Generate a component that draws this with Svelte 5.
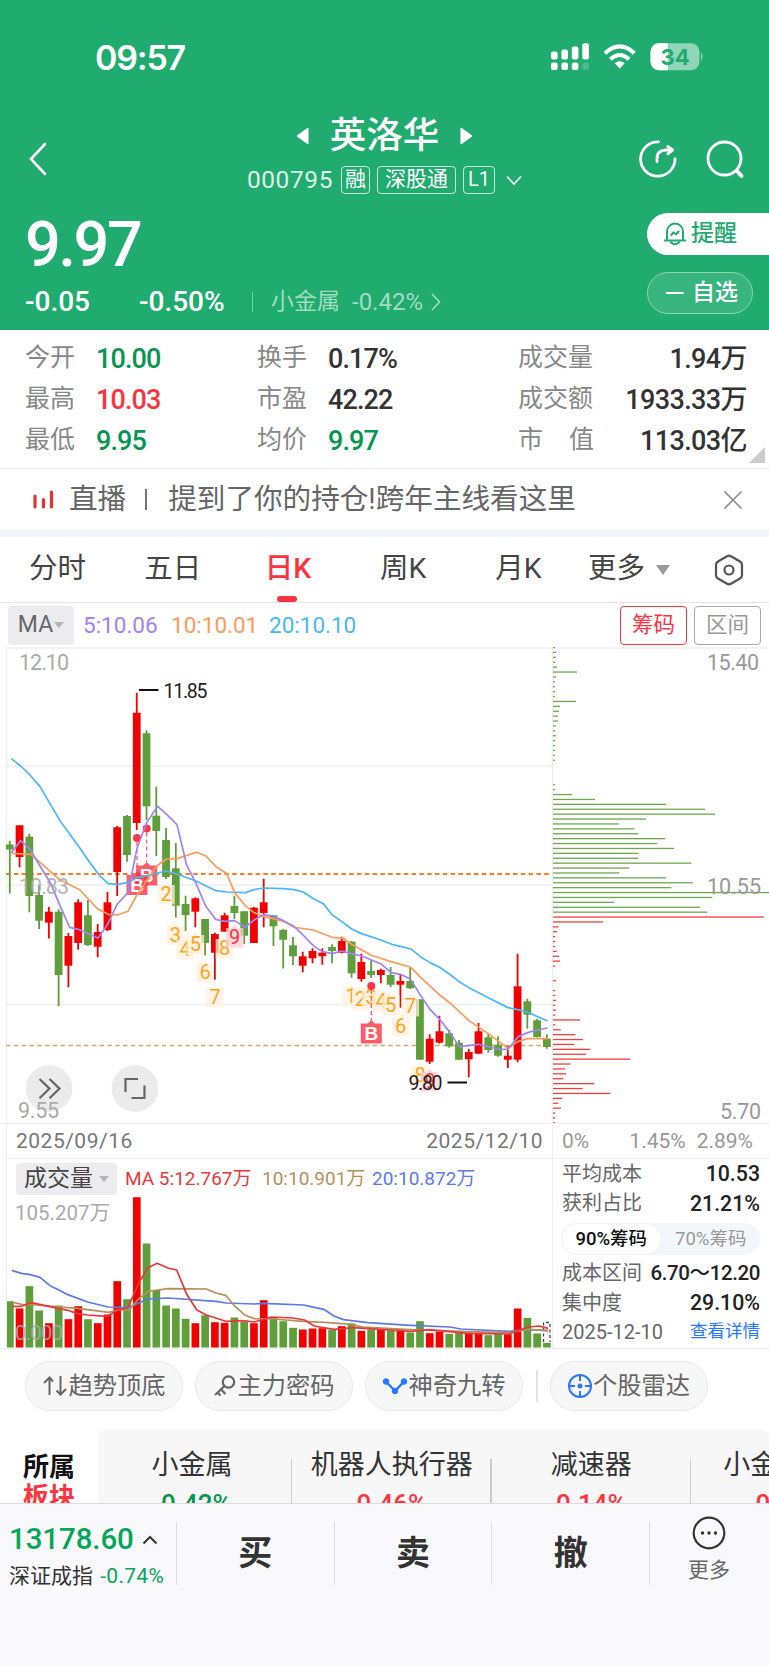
<script>
  // Quote summary, laid out row by row
  const stats = [
    { label: '今开', value: '10.00', tone: 'down' },
    { label: '换手', value: '0.17%', tone: '' },
    { label: '成交量', value: '1.94万', tone: '' },
    { label: '最高', value: '10.03', tone: 'up' },
    { label: '市盈', value: '42.22', tone: '' },
    { label: '成交额', value: '1933.33万', tone: '' },
    { label: '最低', value: '9.95', tone: 'down' },
    { label: '均价', value: '9.97', tone: 'down' },
    { label: '市值', value: '113.03亿', tone: '', spread: true }
  ];

  const tabs = ['分时', '五日', '日K', '周K', '月K'];
  let activeTab = $state('日K');

  const STEP = 9.765;
  const barX = (i) => 9.8 + i * STEP;

  // [direction, high, body top, body bottom, low]
  const candles = [
    ['g', 841, 844.5, 849.5, 893.5], ['r', 825.3, 825.3, 857, 867.3], ['g', 833.7, 836.7, 896, 912.3],
    ['g', 885, 895, 920.7, 929], ['r', 907, 911.7, 922.7, 938.5], ['g', 909, 911.7, 975, 1006],
    ['r', 933, 936, 965.7, 987.3], ['r', 899.3, 902.3, 943, 949.7], ['g', 900, 915.3, 945, 946],
    ['r', 924, 932, 946.7, 957.3], ['r', 892, 902.3, 930, 931], ['r', 826, 827.3, 872, 896],
    ['g', 815, 816, 855, 861.7], ['r', 692.7, 712.7, 823, 830], ['g', 730.3, 733.3, 806.3, 820],
    ['g', 786.7, 815.7, 831, 856], ['g', 828, 840, 877, 879], ['g', 843, 868.3, 905.7, 917.7],
    ['g', 895.7, 904, 915, 931], ['r', 897.3, 898.3, 911.7, 927.3], ['g', 919, 919, 943, 955.3],
    ['r', 932.7, 934, 952.7, 979.7], ['r', 912.7, 915.3, 931.7, 931.7], ['g', 895.7, 906, 913, 919],
    ['g', 911.3, 911.3, 935.7, 944], ['r', 907, 907.7, 943, 943], ['r', 878.7, 902.3, 913, 927.3],
    ['g', 915.3, 915.3, 926.3, 946], ['g', 929, 930, 939.7, 968.5], ['g', 937, 945.3, 956.3, 965],
    ['r', 951.7, 956.3, 965.7, 972.3], ['r', 948.3, 951, 958.3, 963.3], ['r', 948.3, 952.7, 956.3, 964.7],
    ['g', 944.3, 947, 951, 963.3], ['r', 936.7, 941, 952.7, 953.3], ['g', 941, 941.7, 973.3, 977.7],
    ['r', 953.7, 962, 979, 981.7], ['g', 960, 971, 975, 978], ['r', 968.7, 970, 975, 983.3],
    ['g', 967, 975, 984.7, 987], ['r', 975, 981, 984.7, 1007.7], ['g', 967.7, 981, 988.3, 989],
    ['g', 999.3, 999.3, 1059.7, 1059.7], ['r', 1034.3, 1038.7, 1061.7, 1064], ['r', 1015.7, 1031.3, 1042.7, 1043.7],
    ['g', 1030, 1033.3, 1046.3, 1047.7], ['g', 1040, 1042.7, 1059.7, 1059.7], ['r', 1049, 1052, 1059.3, 1077.3],
    ['r', 1023, 1031.3, 1053.7, 1053.7], ['g', 1033.3, 1037.3, 1050, 1052.7], ['g', 1036.3, 1044.7, 1055.7, 1056.7],
    ['r', 1046, 1055.7, 1059.7, 1068], ['r', 953.7, 986.3, 1059.7, 1062.3], ['g', 998.7, 1001.3, 1014.7, 1028.7],
    ['g', 1018.7, 1020.3, 1037, 1037.5], ['g', 1034.3, 1038.7, 1047, 1048.7]
  ];

  // Heights of the volume bars, same order as the candles
  const volumes = [
    46.3, 39, 61.3, 37, 24.3, 42, 28.3, 41.3, 28.3, 24.3, 33, 66.3, 48.3, 150.3, 104, 57.3, 42, 39, 28.7, 24.3,
    32.3, 25.3, 24.7, 30, 25.7, 24.3, 47.3, 29.7, 26.3, 19.7, 18, 19, 19.3, 17.7, 21.3, 24, 16.7, 18, 17.7, 17,
    18, 15, 26.3, 14.3, 16, 13.7, 16, 15, 15, 12.3, 13.7, 13.3, 39, 29.7, 14, 4.7
  ];

  // Chip distribution: bar lengths from the top price down, the current price splits the colours
  const CHIP_SPLIT = 55;
  const chips = [
    2, 3, 3, 2, 4, 24, 3, 2, 2, 2, 2, 23, 7, 6, 5, 5, 3, 2, 3, 2, 2, 2, 2, 2, 0, 0, 0, 0, 2, 2, 19.3, 42, 113.3,
    152.3, 162, 93, 66, 81.3, 85.3, 112.3, 104.3, 121, 85.3, 85.3, 138.3, 76.3, 66.3, 113, 139.7, 118.3, 216,
    159.3, 61, 147, 154.3, 210.7, 50, 5.3, 4, 2.3, 2.3, 2.3, 3.7, 6, 7, 2.3, 0, 0, 3, 0, 2.3, 2.3, 3, 2.3, 3,
    2.3, 27, 2.3, 7.7, 22.3, 30, 21.3, 37.3, 33, 77.3, 17.3, 12, 13, 10.3, 41.3, 29.7, 57.3, 9.3, 5.3, 8, 2.3,
    2.3, 2.3
  ];

  const marks = [
    ['2', 166, 894], ['3', 175.3, 934.5], ['4', 185, 949], ['5', 195.3, 944], ['6', 205, 972], ['7', 215, 997],
    ['8', 224.5, 948], ['9', 234.7, 937], ['1', 351, 996], ['2', 360.7, 999], ['3', 371, 997], ['4', 381, 1001],
    ['5', 390.7, 1004.5], ['6', 400.7, 1026], ['7', 410.3, 1006], ['8', 420, 1075], ['9', 430, 1081]
  ];

  const buys = [
    { x: 146.7, dot: 828.5, y: 875 },
    { x: 137, dot: 838, y: 884.5 },
    { x: 371.3, dot: 986, y: 1033 }
  ];

  // Moving averages, on a grid of a third of a pixel
  const priceLines = [
    {
      color: '#49b8fb',
      points:
        '34,356 62,378 90,405 120,440 180,542 240,625 270,668 298,706 325,731 352,733 384,727 411,713 440,707 499,693 531,702 590,724 647,752 680,756 737,758 762,749 791,744 850,746 883,749 910,756 938,775 970,791 997,825 1026,845 1055,867 1085,881 1143,900 1175,913 1202,919 1233,927 1262,951 1290,968 1319,982 1348,1002 1380,1027 1407,1043 1465,1073 1524,1103 1553,1109 1583,1117 1643,1143'
    },
    {
      color: '#fb9c5b',
      points:
        '34,640 93,643 176,717 240,750 294,808 325,823 352,825 384,814 411,765 470,678 499,657 531,656 590,637 618,648 650,682 680,700 704,758 735,796 762,818 791,829 820,836 850,844 883,862 940,870 997,892 1030,895 1055,913 1114,946 1173,965 1231,981 1265,1015 1319,1065 1350,1089 1407,1142 1465,1181 1524,1225 1553,1205 1583,1196 1643,1196'
    },
    {
      color: '#a183f2',
      points:
        '34,638 62,602 88,625 120,678 152,730 180,797 209,862 235,868 294,894 322,855 352,792 384,758 411,625 440,548 473,499 500,523 531,554 560,675 588,730 617,798 647,838 674,844 704,842 735,862 762,840 791,824 820,828 850,842 880,858 909,885 940,917 967,935 997,941 1026,933 1055,941 1085,948 1114,960 1145,973 1173,998 1202,1003 1231,1017 1262,1067 1290,1108 1319,1138 1348,1175 1378,1220 1436,1213 1495,1228 1524,1228 1555,1190 1583,1178 1612,1170 1643,1164'
    }
  ];

  const volumeLines = [
    {
      color: '#5b7be8',
      points:
        '33,451 60,460 85,464 112,472 140,497 165,510 190,524 245,546 303,561 360,563 388,549 415,537 470,534 605,544 632,549 712,552 737,550 850,555 880,562 907,568 935,588 962,599 1030,608 1150,616 1260,621 1290,627 1425,634 1480,629 1535,632'
    },
    {
      color: '#b5915a',
      points:
        '33,546 60,553 100,555 217,565 305,577 335,569 360,571 388,537 415,514 470,506 578,507 605,519 632,526 657,558 685,585 712,596 765,597 850,604 910,607 985,613 1015,621 1150,629 1310,635 1425,638 1480,628 1535,632'
    },
    {
      color: '#e8383b',
      points:
        '33,559 60,559 88,548 140,560 190,571 217,581 245,585 300,589 330,570 358,563 388,490 415,443 440,430 470,444 495,450 523,523 551,570 578,585 632,604 680,602 712,606 760,591 820,594 853,600 880,618 935,628 990,623 1150,634 1200,629 1310,640 1425,642 1480,621 1510,618 1535,625'
    }
  ];

  const sectors = [
    { name: '小金属', change: '-0.42%', tone: 'down' },
    { name: '机器人执行器', change: '0.46%', tone: 'up' },
    { name: '减速器', change: '0.14%', tone: 'up' },
    { name: '小金属概念', change: '0.42%', tone: 'up' }
  ];
</script>

<div class="page">
  <header>
    <div class="status">
      <span class="clock">09:57</span>
      <svg class="signals" width="152" height="30" viewBox="0 0 152 30">
        <g fill="#fff">
          <rect x="1" y="9.5" width="6.6" height="8" rx="2" />
          <rect x="11.4" y="7.5" width="6.6" height="10" rx="2" />
          <rect x="21.8" y="4.5" width="6.6" height="13" rx="2" />
          <rect x="32.3" y="1.2" width="6.6" height="16.3" rx="2" />
          <rect x="1" y="20.5" width="6.6" height="7.6" rx="2" />
          <rect x="11.4" y="20.5" width="6.6" height="7.6" rx="2" />
          <rect x="21.8" y="20.5" width="6.6" height="7.6" rx="2" />
          <rect x="32.3" y="20.5" width="6.6" height="7.6" rx="2" opacity="0.2" />
          <path d="M69.7 26.5l-5-5.2q5-4 10 0z" />
        </g>
        <g fill="none" stroke="#fff" stroke-width="4">
          <path d="M55 11.2q14.7-13.6 29.4 0" />
          <path d="M60.3 17.2q9.4-8.4 18.8 0" />
        </g>
        <rect x="100.5" y="1.2" width="49" height="27" rx="8.5" fill="#90d5b7" />
        <path d="M117.7 1.2V28.2H109a8.5 8.5 0 0 1-8.5-8.5V9.7a8.5 8.5 0 0 1 8.5-8.5z" fill="#fff" />
        <path d="M151 10.5q3 4 0 8.5z" fill="#90d5b7" />
        <text x="125" y="22.7" text-anchor="middle" class="battery">34</text>
      </svg>
    </div>

    <div class="nav">
      <svg width="24" height="36" viewBox="0 0 24 36">
        <path d="M19 3L5 18l14 15" fill="none" stroke="#fff" stroke-width="2.6" stroke-linecap="round" />
      </svg>
      <div class="heading">
        <div class="title">
          <svg width="14" height="18" viewBox="0 0 14 18"><path d="M12 1v16L1 9z" fill="#fff" stroke="#fff" stroke-linejoin="round" /></svg>
          <h1>英洛华</h1>
          <svg width="14" height="18" viewBox="0 0 14 18"><path d="M2 1v16L13 9z" fill="#fff" stroke="#fff" stroke-linejoin="round" /></svg>
        </div>
        <div class="code">
          <span class="number">000795</span>
          <span class="tag">融</span>
          <span class="tag wide">深股通</span>
          <span class="tag level">L1</span>
          <svg width="16" height="11" viewBox="0 0 16 11"><path d="M1 1.5l7 7.500 7-7.500" fill="none" stroke="#fff" stroke-width="1.6" /></svg>
        </div>
      </div>
      <div class="actions">
        <svg width="40" height="40" viewBox="0 0 40 40" fill="none" stroke="#fff" stroke-width="2.8" stroke-linecap="round" stroke-linejoin="round">
          <path d="M20.5 2.8A17.2 17.2 0 1 0 37 19.8" />
          <path d="M19 22.5v-3q0-8.5 9-8.5h6M29.8 7.3l5 3.7-5 3.8" />
        </svg>
        <svg width="40" height="40" viewBox="0 0 40 40" fill="none" stroke="#fff" stroke-width="2.8" stroke-linecap="round">
          <circle cx="19.5" cy="19.5" r="16.5" />
          <path d="M32 32l4.5 4.8" stroke-width="4" />
        </svg>
      </div>
    </div>

    <div class="quote">
      <div>
        <div class="price">9.97</div>
        <div class="changes">
          <span class="diff">-0.05</span>
          <span class="percent">-0.50%</span>
          <span class="sector">小金属</span>
          <span class="sector-change">-0.42%</span>
          <svg width="12" height="18" viewBox="0 0 12 18"><path d="M2 1l7.5 8L2 17" fill="none" stroke="#a3dcc2" stroke-width="1.6" /></svg>
        </div>
      </div>
      <div class="pills">
        <button class="pill remind">
          <svg width="24" height="24" viewBox="0 0 24 24" fill="none" stroke="#20ab6f" stroke-width="2" stroke-linecap="round" stroke-linejoin="round">
            <path d="M1.8 18.5h20.4M4 18.5V9.5a8 8 0 0 1 16 0v9M8 20.5q4 3.5 8 0" />
            <path d="M8.3 13l2.2-2.7 2.6 1.9 2.6-2.7" />
          </svg>提醒
        </button>
        <button class="pill watch"><i></i>自选</button>
      </div>
    </div>
  </header>

  <section class="stats">
    {#each stats as s}
      <div class="stat">
        <span class="label" class:spread={s.spread}>{s.label}</span>
        <span class="value {s.tone}">{s.value}</span>
      </div>
    {/each}
    <i class="corner"></i>
  </section>

  <section class="live">
    <svg width="22" height="20" viewBox="0 0 22 20" stroke="#e2323b" stroke-width="3.2" stroke-linecap="round">
      <path d="M2 6v11M10.5 9.5v7.5M18.5 2v15" />
    </svg>
    <span>直播</span><i></i><span class="headline">提到了你的持仓!跨年主线看这里</span>
    <svg class="close" width="20" height="20" viewBox="0 0 20 20" stroke="#888" stroke-width="1.6"><path d="M1.5 1.5l17 17M18.5 1.5l-17 17" /></svg>
  </section>

  <nav class="tabs">
    {#each tabs as tab}
      <button class="tab" class:active={tab === activeTab} onclick={() => (activeTab = tab)}>{tab}</button>
    {/each}
    <button class="more-tab">更多<i></i></button>
    <svg width="30" height="32" viewBox="0 0 30 32" fill="none" stroke="#555" stroke-width="2.2" stroke-linejoin="round">
      <path d="M13 2.3q2-1.2 4 0l9 5.2q2 1.2 2 3.3v10.4q0 2.1-2 3.3l-9 5.2q-2 1.2-4 0l-9-5.2q-2-1.2-2-3.3V10.8q0-2.1 2-3.3z" />
      <circle cx="15" cy="16" r="4.5" />
    </svg>
  </nav>

  <div class="legend">
    <span class="picker">MA<i></i></span>
    <span class="ma5">5:10.06</span>
    <span class="ma10">10:10.01</span>
    <span class="ma20">20:10.10</span>
    <button class="toggle on">筹码</button>
    <button class="toggle">区间</button>
  </div>

  <svg class="chart" width="769" height="476" viewBox="0 647 769 476">
    <g stroke="#eeeef0" stroke-width="1.4" fill="none">
      <path d="M6 648H769M6 766H552M6 885H552M6 1004.5H552M6.5 648V1123M552.5 648V1123" />
    </g>
    <g class="axis">
      <text x="19" y="669.5" textLength="50">12.10</text>
    </g>
    <path d="M6 874H550" stroke="#fb7d28" stroke-width="1.8" stroke-dasharray="4.5 3.3" />
    <path d="M6 1045.5H550" stroke="#cdaa6d" stroke-width="1.6" stroke-dasharray="4.5 3.3" />

    {#each candles as [dir, high, top, bottom, low], i}
      <g class={dir}>
        <rect x={barX(i) - 0.9} y={high} width="1.8" height={low - high} />
        <rect x={barX(i) - 3.9} y={top} width="7.8" height={bottom - top} />
      </g>
    {/each}

    {#each marks as [n, x, y]}
      <g class="mark" class:last={n === '9'}>
        <path d="M{x - 8.8} {y - 9}h6l2.8-3.2 2.8 3.2h6v19.5h-17.6z" />
        <text {x} y={y + 7.2} text-anchor="middle">{n}</text>
      </g>
    {/each}

    {#each buys as b}
      <g class="buy">
        <circle cx={b.x} cy={b.dot} r="4" />
        <path d="M{b.x} {b.dot + 4}V{b.y - 13}" class="stem" />
        <path d="M{b.x - 10.5} {b.y - 9.5}h7l3.5-3.5 3.5 3.5h7v20h-21z" opacity="0.8" />
        <text x={b.x} y={b.y + 7} text-anchor="middle">B</text>
      </g>
    {/each}

    <g transform="translate(0 640) scale(0.3333)">
      {#each priceLines as line}
        <polyline points={line.points} stroke={line.color} class="average" />
      {/each}
    </g>

    <g class="peak">
      <path d="M139 690H158.5M447.5 1082.5H467" />
      <text x="163.5" y="697.5" textLength="44">11.85</text>
      <text x="408.5" y="1089.5" textLength="34">9.80</text>
    </g>

    {#each chips as w, i}
      {#if w}
        <rect x="553" y={646.9 + i * 4.9} width={w} height="1.3" fill={i < CHIP_SPLIT ? '#6fa94e' : '#f2403f'} />
      {/if}
    {/each}

    <g fill="#ebebeb">
      <circle cx="49" cy="1088.5" r="23.4" />
      <circle cx="135" cy="1088.5" r="23.4" />
    </g>
    <g fill="none" stroke="#666" stroke-width="2.2">
      <path d="M39.5 1079l10 9.6-10 9.7M49.5 1079l10 9.6-10 9.7" />
      <path d="M125.5 1092v-13h12.5M144.5 1085.5V1098h-13" />
    </g>

    <g class="axis">
      <text x="19" y="893.5" textLength="50" opacity="0.85">10.83</text>
      <text x="18" y="1118" textLength="41">9.55</text>
    </g>
    <g class="axis dark">
      <text x="707" y="669.5" textLength="52">15.40</text>
      <text x="707" y="893.5" textLength="54">10.55</text>
      <text x="720" y="1118.5" textLength="41">5.70</text>
    </g>
  </svg>

  <div class="lower">
    <div class="volume">
      <div class="dates"><span>2025/09/16</span><span>2025/12/10</span></div>
      <div class="volume-legend">
        <span class="picker">成交量<i></i></span>
        <span class="v5">MA 5:12.767万</span>
        <span class="v10">10:10.901万</span>
        <span class="v20">20:10.872万</span>
      </div>
      <svg width="545" height="152" viewBox="7 1196 545 152">
        <text x="15" y="1220" class="scale" textLength="95">105.207万</text>
        {#each volumes as h, i}
          <rect x={barX(i) - 3.8} y={1347.5 - h} width="7.7" height={h} class={candles[i][0]} />
        {/each}
        <path d="M543.5 1342V1322.5H550V1342" fill="none" stroke="#444" stroke-width="1.3" stroke-dasharray="3 2.5" />
        <g transform="translate(0 1120) scale(0.3571 0.3333)">
          {#each volumeLines as line}
            <polyline points={line.points} stroke={line.color} class="average" />
          {/each}
        </g>
        <text x="15" y="1340" class="scale" opacity="0.85" textLength="48">0.000</text>
      </svg>
    </div>

    <aside>
      <div class="percents"><span>0%</span><span>1.45%</span><span>2.89%</span></div>
      <div class="row"><span>平均成本</span><b>10.53</b></div>
      <div class="row"><span>获利占比</span><b>21.21%</b></div>
      <div class="switch"><span class="on">90%筹码</span><span>70%筹码</span></div>
      <div class="row"><span>成本区间</span><b class="range">6.70～12.20</b></div>
      <div class="row"><span>集中度</span><b>29.10%</b></div>
      <div class="row last"><span>2025-12-10</span><a href="#detail">查看详情</a></div>
    </aside>
  </div>

  <div class="tools">
    <button>
      <svg width="26" height="24" viewBox="0 0 26 24" fill="none" stroke="#666" stroke-width="2"><path d="M7.5 21V4M2 9l5.5-5.5L11 7.500M18.5 2v18M14.5 16.5l4 4 5.5-5.5" /></svg>趋势顶底
    </button>
    <button>
      <svg width="24" height="24" viewBox="0 0 24 24" fill="none" stroke="#666" stroke-width="2.2"><circle cx="15.5" cy="8" r="5.7" /><path d="M11.5 12L2 21M8 15.5l4.5 4.500M4.5 18.5l3 3" /></svg>主力密码
    </button>
    <button>
      <svg width="26" height="24" viewBox="0 0 26 24" fill="#2878ff" stroke="#2878ff"><path d="M4 7.5l9 9.5 9-9.5" fill="none" stroke-width="2.5" /><circle cx="4" cy="7.5" r="2.8" /><circle cx="13" cy="17" r="2.8" /><circle cx="22" cy="7.5" r="2.8" /></svg>神奇九转
    </button>
    <i></i>
    <button>
      <svg width="26" height="26" viewBox="0 0 26 26" fill="none" stroke="#2878ff" stroke-width="2"><circle cx="13" cy="13" r="11" /><path d="M13 2v6M13 18v6M2 13h6M18 13h6" /><circle cx="13" cy="13" r="1.5" fill="#2878ff" /></svg>个股雷达
    </button>
  </div>

  <section class="sectors">
    <div class="sectors-title">所属<br /><em>板块</em></div>
    <div class="sector-list">
      {#each sectors as s}
        <div class="sector-item">
          <span>{s.name}</span>
          <b class={s.tone}>{s.change}</b>
        </div>
      {/each}
    </div>
  </section>

  <footer>
    <div class="index">
      <div class="index-value">13178.60<svg width="16" height="10" viewBox="0 0 16 10"><path d="M1.5 8.5L8 2l6.5 6.5" fill="none" stroke="#333" stroke-width="2" /></svg></div>
      <div class="index-name">深证成指 <span>-0.74%</span></div>
    </div>
    <button>买</button>
    <button>卖</button>
    <button>撤</button>
    <button class="more">
      <svg width="34" height="34" viewBox="0 0 34 34"><circle cx="17" cy="17" r="15.3" fill="none" stroke="#333" stroke-width="2.2" /><g fill="#333"><circle cx="10.5" cy="17" r="1.7" /><circle cx="17" cy="17" r="1.7" /><circle cx="23.5" cy="17" r="1.7" /></g></svg>
      更多
    </button>
  </footer>
</div>

<style>
  :global(body) {
    background: #fff;
  }

  .page {
    width: 769px;
    height: 1665px;
    overflow: hidden;
    display: flex;
    flex-direction: column;
    font-family: Roboto, 'Noto Sans CJK SC', sans-serif;
    line-height: 1.2;
    color: #333;
    white-space: nowrap;
  }

  .page * {
    box-sizing: border-box;
  }

  svg {
    display: block;
    flex: none;
  }

  button {
    font: inherit;
    color: inherit;
    border: 0;
    padding: 0;
    background: none;
  }

  .up { color: #fb3440; }
  .down { color: #07964f; }

  /* Header */
  header {
    height: 330px;
    flex: none;
    background: #20ab6f;
    color: #fff;
  }

  .status {
    height: 114px;
    padding: 0 67px 0 95px;
    display: flex;
    align-items: center;
    justify-content: space-between;
  }

  .clock {
    font: 600 34px Inter, sans-serif;
    letter-spacing: -1.2px;
  }

  .signals {
    overflow: visible;
  }

  .battery {
    font: 700 22px Inter, sans-serif;
    fill: #20ab6f;
  }

  .nav {
    height: 90px;
    display: grid;
    grid-template-columns: 100px 1fr 100px;
    align-items: center;
    padding: 0 26px;
  }

  .title {
    height: 44px;
    display: flex;
    align-items: center;
    justify-content: center;
    gap: 20px;
  }

  h1 {
    margin: 0;
    font-size: 36.5px;
    font-weight: 500;
    line-height: 44px;
  }

  .code {
    height: 46px;
    display: flex;
    align-items: center;
    justify-content: center;
    gap: 7px;
    padding-bottom: 2px;
    font-size: 21px;
  }

  .number {
    font-size: 24.5px;
    letter-spacing: 0.6px;
    margin-right: 1px;
    opacity: 0.85;
  }

  .tag {
    height: 28px;
    line-height: 25px;
    padding: 0 3px;
    border: 1.5px solid rgba(255, 255, 255, 0.75);
    border-radius: 4px;
  }

  .tag.wide { padding: 0 7px; }
  .tag.level { font-size: 20px; padding: 0 4px; margin-right: 4px; }

  .actions {
    display: flex;
    gap: 27px;
    justify-content: flex-end;
    margin-right: -2px;
    padding-bottom: 1px;
  }

  .quote {
    display: flex;
    justify-content: space-between;
    padding-left: 25px;
  }

  .price {
    height: 80px;
    line-height: 81px;
    font-size: 63px;
    font-weight: 500;
    letter-spacing: -2.4px;
  }

  .changes {
    height: 36px;
    display: flex;
    align-items: center;
    font-size: 28px;
  }

  .diff { width: 114px; font-weight: 500; }
  .percent { width: 113px; font-weight: 500; }

  .sector {
    border-left: 1.5px solid #79cba9;
    padding-left: 18px;
    margin-right: 12px;
    color: #a3dcc2;
    font-size: 23px;
    line-height: 20px;
  }

  .sector-change {
    color: #a3dcc2;
    font-size: 24px;
    margin-right: 7px;
  }

  .pills {
    width: 122px;
    padding-top: 9px;
    display: flex;
    flex-direction: column;
    gap: 17px;
  }

  .pill {
    height: 42px;
    display: flex;
    align-items: center;
    font-size: 23px;
    font-weight: 500;
    border-radius: 21px;
  }

  .remind {
    background: #fff;
    color: #20ab6f;
    padding-left: 16px;
    gap: 4px;
    border-radius: 21px 0 0 21px;
  }

  .watch {
    width: 106px;
    padding-left: 18px;
    gap: 8px;
    background: #38b47f;
    border: 1.5px solid #8fd4b5;
  }

  .watch i {
    width: 18px;
    height: 2px;
    background: #fff;
  }

  /* Quote summary */
  .stats {
    position: relative;
    height: 139px;
    flex: none;
    display: grid;
    grid-template-columns: 232px 261px 1fr;
    grid-auto-rows: 41px;
    padding: 8px 22px 0 25px;
    border-bottom: 1.5px solid #eee;
  }

  .stat {
    display: flex;
    align-items: center;
  }

  .label {
    font-size: 25px;
    color: #888;
    width: 71px;
    line-height: 36px;
    padding-bottom: 2px;
  }

  .stat:nth-child(3n) .label { width: 77px; }
  .label.spread { letter-spacing: 26px; }

  .value {
    font-size: 27px;
    font-weight: 500;
    line-height: 36px;
    letter-spacing: -0.9px;
  }

  .stat:nth-child(3n) .value {
    margin-left: auto;
    letter-spacing: -0.6px;
  }

  .corner {
    position: absolute;
    right: 4px;
    bottom: 5px;
    border-left: 16px solid transparent;
    border-bottom: 16px solid #ccc;
  }

  /* Live strip */
  .live {
    height: 68px;
    flex: none;
    display: flex;
    align-items: center;
    padding: 0 26px 0 33px;
    border-bottom: 7px solid #f3f4f9;
    font-size: 28.6px;
    color: #666;
  }

  .live span { margin-left: 14px; }

  .live i {
    width: 2px;
    height: 21px;
    margin-left: 19px;
    background: #777;
  }

  .live .headline { margin-left: 21px; }
  .live .close { margin-left: auto; }

  /* Period tabs */
  .tabs {
    height: 66px;
    flex: none;
    display: flex;
    align-items: center;
    padding: 0 25px 0 0;
    border-bottom: 1.5px solid #e4e4e6;
    font-size: 28.5px;
    color: #444;
  }

  .tab {
    position: relative;
    width: 115.2px;
    height: 100%;
  }

  .tab.active { color: #fb3440; font-weight: 500; }

  .tab.active::after {
    content: '';
    position: absolute;
    left: 47px;
    bottom: 0;
    width: 20px;
    height: 6px;
    border-radius: 3px;
    background: #fb3440;
  }

  .more-tab {
    display: flex;
    align-items: center;
    gap: 11px;
    margin: 0 auto 0 12px;
  }

  .more-tab i {
    border: 7px solid transparent;
    border-top: 10px solid #999;
    border-bottom: 0;
  }

  /* MA legend */
  .legend {
    height: 44px;
    flex: none;
    display: flex;
    align-items: center;
    padding: 0 8px;
    font-size: 22.5px;
  }

  .picker {
    display: flex;
    align-items: center;
    justify-content: center;
    background: #ececee;
    border-radius: 4px;
    color: #444;
  }

  .legend .picker {
    width: 66px;
    height: 39px;
    font-size: 23px;
    color: #666;
    margin-right: 9px;
  }

  .picker i {
    margin-left: 1px;
    border: 5px solid transparent;
    border-top: 6px solid #b5b5b5;
    border-bottom: 0;
  }

  .ma5 { color: #a183f2; width: 88px; }
  .ma10 { color: #fb9c5b; width: 98px; }
  .ma20 { color: #49b8fb; margin-right: auto; }

  .toggle {
    width: 67px;
    height: 39px;
    margin-left: 7px;
    border: 1.5px solid #aaa;
    border-radius: 4px;
    font-size: 21.5px;
    color: #999;
  }

  .toggle.on {
    border-color: #fb3440;
    color: #fb3440;
  }

  /* Charts */
  .r { fill: #ee0202; }
  .g { fill: #5f9e3a; }

  .average {
    fill: none;
    stroke-width: 1.7;
    stroke-linejoin: round;
    vector-effect: non-scaling-stroke;
  }

  .axis text {
    font-size: 21.5px;
    fill: #aaa;
  }

  .axis.dark text { fill: #999; }

  .mark path { fill: rgba(255, 240, 220, 0.75); }
  .mark text { fill: #fba31c; font-size: 20px; }
  .mark.last path { fill: rgba(255, 205, 210, 0.75); }
  .mark.last text { fill: #fb3440; }

  .buy { fill: #fb3543; }
  .buy text { fill: #fff; font: 700 19px 'Liberation Sans', sans-serif; }
  .buy .stem { stroke: #fb3543; stroke-width: 1; stroke-dasharray: 4 3; }

  .peak path { stroke: #111; stroke-width: 1.8; }
  .peak text { font-size: 19.5px; fill: #222; }

  .lower {
    height: 226px;
    flex: none;
    display: flex;
    border-bottom: 1px solid #eee;
    border-top: 1.5px solid #eeeef0;
  }

  .volume {
    width: 547px;
    margin-left: 6px;
    border-left: 1px solid #eeeef0;
    border-right: 1px solid #eeeef0;
  }

  .dates {
    height: 35px;
    display: flex;
    align-items: center;
    justify-content: space-between;
    padding: 2px 9px 0;
    font-size: 21px;
    letter-spacing: 0.5px;
    color: #777;
    border-bottom: 1.5px solid #eeeef0;
  }

  .volume-legend {
    height: 37px;
    display: flex;
    align-items: center;
    padding: 3px 0 0 9px;
    font-size: 19px;
    line-height: 30px;
  }

  .volume-legend .picker {
    width: 101px;
    height: 32px;
    font-size: 23px;
    margin-right: 8px;
  }

  .volume-legend .picker i { margin-left: 6px; }

  .v5 { color: #e8383b; width: 137px; }
  .v10 { color: #b5915a; width: 110px; }
  .v20 { color: #5b7be8; }

  .scale {
    font-size: 20.5px;
    fill: #aaa;
  }

  aside {
    flex: 1;
    display: flex;
    flex-direction: column;
  }

  .percents {
    height: 35px;
    flex: none;
    display: flex;
    align-items: center;
    padding: 2px 16px 0 9px;
    font-size: 21px;
    color: #999;
    border-bottom: 1.5px solid #eeeef0;
  }

  .percents span:nth-child(2) { margin-left: auto; margin-right: 11px; }

  .row {
    height: 29.3px;
    flex: none;
    display: flex;
    align-items: center;
    justify-content: space-between;
    padding: 0 9px;
    font-size: 20px;
    color: #666;
  }

  .row b {
    font-size: 21.3px;
    font-weight: 500;
    color: #222;
    padding-top: 1px;
  }

  .row .range {
    font-size: 20.5px;
    letter-spacing: -0.4px;
  }

  .row.last { font-size: 20px; }

  .row a {
    color: #2878ff;
    font-size: 17.5px;
    text-decoration: none;
  }

  .switch {
    height: 32px;
    flex: none;
    margin: 5px 9px 4px 8px;
    display: flex;
    border-radius: 16px;
    background: #f3f6fa;
    font-size: 18.5px;
    line-height: 32px;
    color: #999;
  }

  .switch span {
    flex: 1;
    text-align: center;
    border-radius: 16px;
  }

  .switch .on {
    background: #fff;
    border: 1.5px solid #eef2f7;
    line-height: 30px;
    color: #111;
    font-weight: 500;
  }

  /* Tool chips */
  .tools {
    height: 81px;
    flex: none;
    display: flex;
    align-items: center;
    padding: 0 0 8px 25px;
  }

  .tools button {
    width: 158px;
    height: 50px;
    margin-right: 12px;
    display: flex;
    align-items: center;
    justify-content: center;
    border: 1.5px solid #e6e6e8;
    border-radius: 25px;
    background: #f7f7f8;
    font-size: 24.3px;
    color: #666;
  }

  .tools i {
    width: 1.5px;
    height: 32px;
    margin: 0 12px 0 1px;
    background: #e2e2e2;
  }

  /* Sectors */
  .sectors {
    height: 73px;
    flex: none;
    display: flex;
    overflow: hidden;
  }

  .sectors-title {
    width: 98px;
    flex: none;
    padding-top: 22px;
    text-align: center;
    font-size: 26px;
    font-weight: 700;
    line-height: 30px;
    color: #111;
  }

  .sectors-title em {
    font-style: normal;
    color: #fb3440;
  }

  .sector-list {
    flex: 1;
    display: flex;
    overflow: hidden;
    background: #f7f7f8;
    border-radius: 8px 8px 0 0;
  }

  .sector-item {
    position: relative;
    width: 199.5px;
    flex: none;
    padding: 16px 0 0;
    text-align: center;
    font-size: 27px;
    line-height: 38px;
  }

  .sector-item:first-child { width: 194px; padding-right: 6px; }

  .sector-item:not(:last-child)::after {
    content: '';
    position: absolute;
    right: 0;
    top: 29px;
    bottom: -20px;
    width: 1.5px;
    background: #ccc;
  }

  .sector-item span,
  .sector-item b {
    display: block;
  }

  .sector-item b {
    font-size: 26px;
    font-weight: 500;
    line-height: 40px;
  }

  /* Trading bar */
  footer {
    flex: 1;
    display: flex;
    align-items: flex-start;
    padding-top: 18px;
    border-top: 1.5px solid #dcdcde;
    background: #f9f9fc;
  }

  .index {
    width: 177px;
    height: 63px;
    padding-left: 9px;
    border-right: 1.5px solid #dedee2;
  }

  .index-value {
    display: flex;
    align-items: center;
    gap: 8px;
    height: 36px;
    font-size: 29.5px;
    font-weight: 500;
    letter-spacing: -0.1px;
    color: #06a65a;
  }

  .index-name {
    height: 34px;
    line-height: 36px;
    font-size: 21px;
  }

  .index-name span {
    margin-left: 2px;
    color: #06a65a;
    letter-spacing: 0.3px;
  }

  footer button {
    width: 157.7px;
    height: 63px;
    font-size: 34px;
    font-weight: 700;
    border-right: 1.5px solid #dedee2;
  }

  footer .more {
    width: 118px;
    height: auto;
    display: flex;
    flex-direction: column;
    align-items: center;
    margin-top: -6px;
    border: 0;
    font-size: 21px;
    font-weight: 400;
    color: #666;
    line-height: 40px;
  }
</style>
